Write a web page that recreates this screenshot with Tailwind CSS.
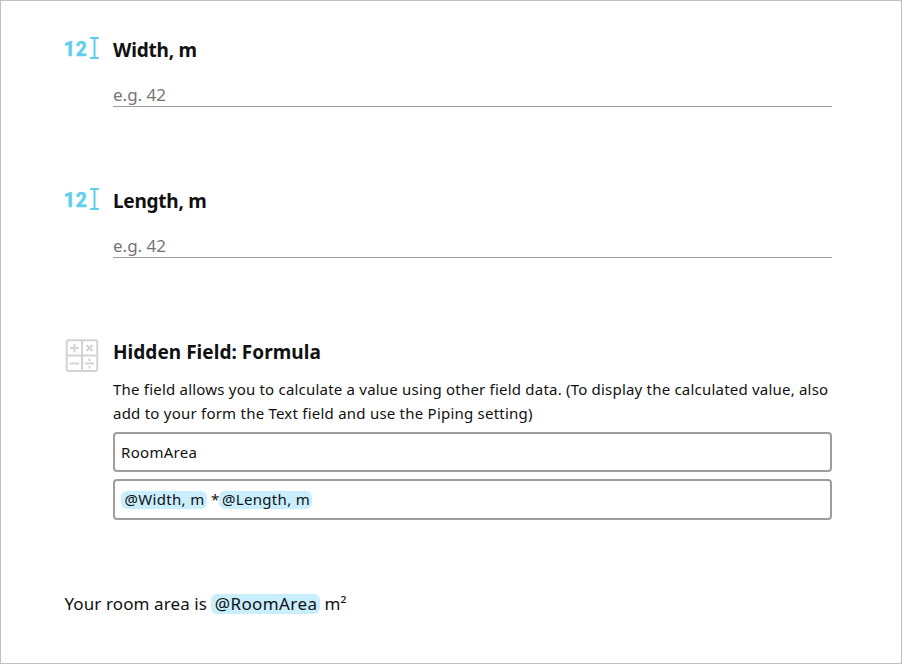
<!DOCTYPE html>
<html lang="en">
<head>
<meta charset="utf-8">
<title>Room area form</title>
<script src="https://cdn.jsdelivr.net/npm/@tailwindcss/browser@4"></script>
</head>
<body class="bg-white">
<main class="flex h-[664px] w-[902px] flex-col overflow-hidden border border-[#c0c0c0] pl-[63px] pt-[35px] font-['Noto_Sans',sans-serif] text-[#111]">
  <section class="flex h-[151px] gap-[12px]">
    <svg class="h-[26px] w-[37px] shrink-0" viewBox="0 0 37 26" fill="none" stroke="#5dcfee" stroke-width="2">
      <g font-family="Roboto" font-weight="700" font-size="20.500" fill="#5dcfee" stroke-width="0.5" stroke-linejoin="round"><text x="-0.5" y="19.500">1</text><text x="11.800" y="19.500" textLength="11" lengthAdjust="spacingAndGlyphs">2</text></g>
      <path d="M26.200 2h8.600M26.200 22h8.600M30.500 2v20"/>
    </svg>
    <div class="w-[719px]">
      <h2 class="h-[28px] whitespace-nowrap text-[19px] font-bold leading-[28px] tracking-[-0.2px]">Width, m</h2>
      <div class="mt-[19px] h-[24px] border-b border-[#9e9e9e] text-[17px] leading-[24px] text-[#757575]">e.g. 42</div>
    </div>
  </section>
  <section class="flex h-[151px] gap-[12px]">
    <svg class="h-[26px] w-[37px] shrink-0" viewBox="0 0 37 26" fill="none" stroke="#5dcfee" stroke-width="2">
      <g font-family="Roboto" font-weight="700" font-size="20.500" fill="#5dcfee" stroke-width="0.5" stroke-linejoin="round"><text x="-0.5" y="19.500">1</text><text x="11.800" y="19.500" textLength="11" lengthAdjust="spacingAndGlyphs">2</text></g>
      <path d="M26.200 2h8.600M26.200 22h8.600M30.500 2v20"/>
    </svg>
    <div class="w-[719px]">
      <h2 class="h-[28px] whitespace-nowrap text-[19px] font-bold leading-[28px] tracking-[-0.25px]">Length, m</h2>
      <div class="mt-[19px] h-[24px] border-b border-[#9e9e9e] text-[17px] leading-[24px] text-[#757575]">e.g. 42</div>
    </div>
  </section>
  <section class="flex h-[254px] gap-[12px]">
    <svg class="h-[36px] w-[37px] shrink-0" viewBox="0 0 37 36" fill="none" stroke="#d3d3d3" stroke-width="2">
      <rect x="2.700" y="2.300" width="30.600" height="30.600" rx="2"/>
      <path d="M18 2v31M3 17.500h30"/>
      <path d="M6 10h9M10.500 5.500v9M22.500 7l6 6M28.500 7l-6 6M6 25.500h9"/>
      <path d="M21 25.500h9M25.500 20.500v2.500M25.500 28v2.500"/>
    </svg>
    <div class="w-[719px]">
      <h2 class="h-[28px] whitespace-nowrap text-[19px] font-bold leading-[28px] tracking-[0.04px]">Hidden Field: Formula</h2>
      <p class="mt-[11px] whitespace-nowrap text-[15px] leading-[24px]"><span class="tracking-[0.207px]">The field allows you to calculate a value using other field data. (To display the calculated value, also</span><br><span class="tracking-[0.229px]">add to your form the Text field and use the Piping setting)</span></p>
      <div class="mt-[7px] flex h-[40px] items-center rounded-[4px] border-2 border-[#9e9e9e] px-[6px] text-[15px] tracking-[0.3px]">RoomArea</div>
      <div class="mt-[7px] flex h-[41px] items-center whitespace-nowrap rounded-[4px] border-2 border-[#9e9e9e] px-[6px] text-[15px] tracking-[0.32px]"><span class="flex h-[18px] w-[86px] items-center justify-center rounded-[6px] bg-[#c8eeff] pl-[1px]">@Width, m</span><span class="w-[12px] pl-[4px]">*</span><span class="flex h-[18px] w-[93px] items-center justify-center rounded-[6px] bg-[#c8eeff] pl-[1px]">@Length, m</span></div>
    </div>
  </section>
  <p class="flex h-[24px] items-center whitespace-nowrap pl-[0.5px] text-[17px]"><span class="tracking-[0.1px]">Your room area is</span><span class="ml-[4px] flex h-[20px] w-[109px] items-center justify-center rounded-[6px] bg-[#c8eeff] pl-[1px] tracking-[0.4px]">@RoomArea</span><span class="ml-[4.5px]">m²</span></p>
</main>
</body>
</html>
